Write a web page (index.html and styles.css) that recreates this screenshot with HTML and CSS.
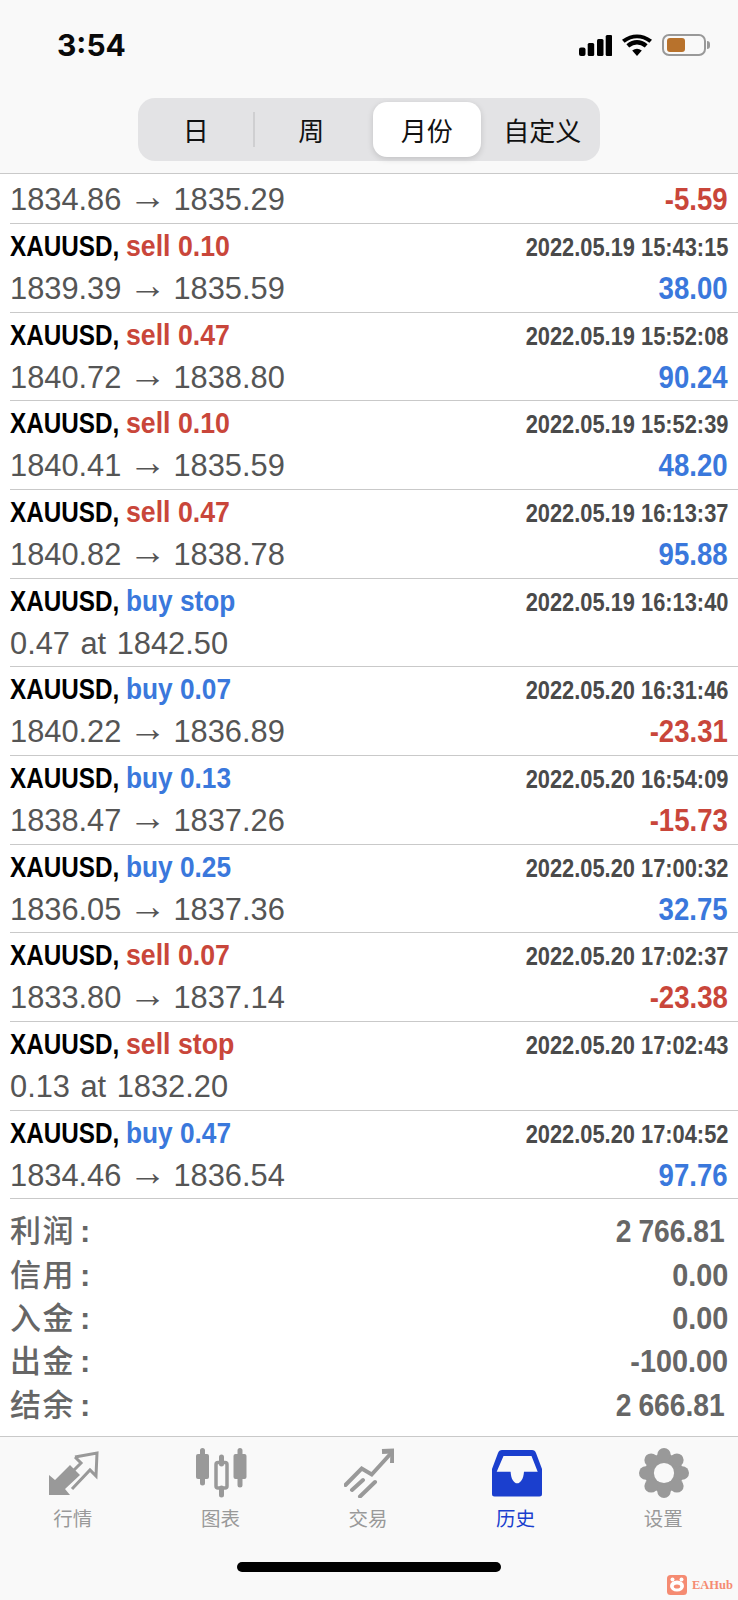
FILE: index.html
```html
<!DOCTYPE html>
<html>
<head>
<meta charset="utf-8">
	<title>History</title>
	<link rel="stylesheet" href="styles.css">
</head>
<body>

<div class="page">
	<div class="top">
		<div class="status">
			<span class="clock">3:54</span>
			<div class="status-icons">
				<svg class="signal" width="33" height="21" viewBox="0 0 33 21">
					<rect x="0" y="12.5" width="6.5" height="8.5" rx="2"/>
					<rect x="8.7" y="8" width="6.5" height="13" rx="1.5"/>
					<rect x="18" y="4" width="6.5" height="17" rx="1.5"/>
					<rect x="26.7" y="0" width="6.5" height="21" rx="1.5"/>
				</svg>
				<svg class="wifi" width="30" height="22" viewBox="0 0 30 22">
					<path d="M15 22 L10.2 16.6 Q15 13 19.8 16.6 Z"/>
					<path d="M7.2 13.4 L4.4 10.2 Q15 1.8 25.6 10.2 L22.8 13.4 Q15 7.4 7.2 13.4 Z"/>
					<path d="M2.6 8.3 L0 5.4 Q15 -5.2 30 5.4 L27.4 8.3 Q15 -0.6 2.6 8.3 Z" transform="translate(0 0.4)"/>
				</svg>
				<div class="battery"><div class="battery-fill"></div></div>
				<div class="battery-nub"></div>
			</div>
		</div>
		<div class="segments">
			<div class="seg seg-line">日</div>
			<div class="seg">周</div>
			<div class="seg active">月份</div>
			<div class="seg">自定义</div>
		</div>
	</div>

	<div class="list">
		<div class="row row-cut">
			<div class="line">
				<span class="price">1834.86 <span class="arrow">→</span> 1835.29</span>
				<span class="pnl neg">-5.59</span>
			</div>
		</div>
		<div class="row">
			<div class="line">
				<div class="title"><span class="sym">XAUUSD,</span><span class="act sell">sell 0.10</span></div>
				<span class="time">2022.05.19 15:43:15</span>
			</div>
			<div class="line">
				<span class="price">1839.39 <span class="arrow">→</span> 1835.59</span>
				<span class="pnl pos">38.00</span>
			</div>
		</div>
		<div class="row">
			<div class="line">
				<div class="title"><span class="sym">XAUUSD,</span><span class="act sell">sell 0.47</span></div>
				<span class="time">2022.05.19 15:52:08</span>
			</div>
			<div class="line">
				<span class="price">1840.72 <span class="arrow">→</span> 1838.80</span>
				<span class="pnl pos">90.24</span>
			</div>
		</div>
		<div class="row">
			<div class="line">
				<div class="title"><span class="sym">XAUUSD,</span><span class="act sell">sell 0.10</span></div>
				<span class="time">2022.05.19 15:52:39</span>
			</div>
			<div class="line">
				<span class="price">1840.41 <span class="arrow">→</span> 1835.59</span>
				<span class="pnl pos">48.20</span>
			</div>
		</div>
		<div class="row">
			<div class="line">
				<div class="title"><span class="sym">XAUUSD,</span><span class="act sell">sell 0.47</span></div>
				<span class="time">2022.05.19 16:13:37</span>
			</div>
			<div class="line">
				<span class="price">1840.82 <span class="arrow">→</span> 1838.78</span>
				<span class="pnl pos">95.88</span>
			</div>
		</div>
		<div class="row">
			<div class="line">
				<div class="title"><span class="sym">XAUUSD,</span><span class="act buy">buy stop</span></div>
				<span class="time">2022.05.19 16:13:40</span>
			</div>
			<div class="line">
				<span class="price">0.47 at 1842.50</span>
			</div>
		</div>
		<div class="row">
			<div class="line">
				<div class="title"><span class="sym">XAUUSD,</span><span class="act buy">buy 0.07</span></div>
				<span class="time">2022.05.20 16:31:46</span>
			</div>
			<div class="line">
				<span class="price">1840.22 <span class="arrow">→</span> 1836.89</span>
				<span class="pnl neg">-23.31</span>
			</div>
		</div>
		<div class="row">
			<div class="line">
				<div class="title"><span class="sym">XAUUSD,</span><span class="act buy">buy 0.13</span></div>
				<span class="time">2022.05.20 16:54:09</span>
			</div>
			<div class="line">
				<span class="price">1838.47 <span class="arrow">→</span> 1837.26</span>
				<span class="pnl neg">-15.73</span>
			</div>
		</div>
		<div class="row">
			<div class="line">
				<div class="title"><span class="sym">XAUUSD,</span><span class="act buy">buy 0.25</span></div>
				<span class="time">2022.05.20 17:00:32</span>
			</div>
			<div class="line">
				<span class="price">1836.05 <span class="arrow">→</span> 1837.36</span>
				<span class="pnl pos">32.75</span>
			</div>
		</div>
		<div class="row">
			<div class="line">
				<div class="title"><span class="sym">XAUUSD,</span><span class="act sell">sell 0.07</span></div>
				<span class="time">2022.05.20 17:02:37</span>
			</div>
			<div class="line">
				<span class="price">1833.80 <span class="arrow">→</span> 1837.14</span>
				<span class="pnl neg">-23.38</span>
			</div>
		</div>
		<div class="row">
			<div class="line">
				<div class="title"><span class="sym">XAUUSD,</span><span class="act sell">sell stop</span></div>
				<span class="time">2022.05.20 17:02:43</span>
			</div>
			<div class="line">
				<span class="price">0.13 at 1832.20</span>
			</div>
		</div>
		<div class="row">
			<div class="line">
				<div class="title"><span class="sym">XAUUSD,</span><span class="act buy">buy 0.47</span></div>
				<span class="time">2022.05.20 17:04:52</span>
			</div>
			<div class="line">
				<span class="price">1834.46 <span class="arrow">→</span> 1836.54</span>
				<span class="pnl pos">97.76</span>
			</div>
		</div>
	</div>

	<div class="summary">
		<div class="sum-row"><span class="sum-label">利润<i class="colon">:</i></span><span class="sum-value wide">2 766.81</span></div>
		<div class="sum-row"><span class="sum-label">信用<i class="colon">:</i></span><span class="sum-value">0.00</span></div>
		<div class="sum-row"><span class="sum-label">入金<i class="colon">:</i></span><span class="sum-value">0.00</span></div>
		<div class="sum-row"><span class="sum-label">出金<i class="colon">:</i></span><span class="sum-value">-100.00</span></div>
		<div class="sum-row"><span class="sum-label">结余<i class="colon">:</i></span><span class="sum-value wide">2 666.81</span></div>
	</div>

	<div class="bottom">
		<div class="tabs">
			<div class="tab">
				<svg class="tab-icon" width="50" height="50" viewBox="0 0 50 50">
					<path d="M0 47 L0 27 L6 32 L21 17 L31 27 L16 41 L21 47 Z" fill="#999"/>
					<path d="M26 9 L48 5 L47 28 L41 22 L23 41 M26 9 L32 15 L23 24" fill="none" stroke="#999" stroke-width="3"/>
				</svg>
				<span class="tab-label">行情</span>
			</div>
			<div class="tab">
				<svg class="tab-icon" width="51" height="50" viewBox="0 0 51 50">
					<path d="M6.5 2.5 V35 M44 2.5 V37 M25.5 9 V16 M25.5 40 V47" stroke="#999" stroke-width="5" stroke-linecap="round"/>
					<rect x="0" y="6" width="13" height="25" rx="2" fill="#999"/>
					<rect x="37.5" y="6" width="13" height="25" rx="2" fill="#999"/>
					<rect x="20" y="14.5" width="11" height="25.5" rx="2" fill="none" stroke="#999" stroke-width="3.5"/>
				</svg>
				<span class="tab-label">图表</span>
			</div>
			<div class="tab">
				<svg class="tab-icon" width="50" height="50" viewBox="0 0 50 50">
					<path d="M1.5 37 L17.7 20.5 L27.7 26.5 L47.7 4.5" fill="none" stroke="#999" stroke-width="4" stroke-linecap="round"/>
					<path d="M8 42 L19 32 M16 48.5 L31 34" fill="none" stroke="#999" stroke-width="4" stroke-linecap="round"/>
					<path d="M38 3.5 L49 3 L48.5 15" fill="none" stroke="#999" stroke-width="5"/>
				</svg>
				<span class="tab-label">交易</span>
			</div>
			<div class="tab tab-on">
				<svg class="tab-icon" width="50" height="50" viewBox="0 0 50 50">
					<path fill-rule="evenodd" fill="#1b3fce" d="M10 2 H40 Q43 2 44 5 L50 21 V46 Q50 48.5 47.5 48.5 H2.5 Q0 48.5 0 46 V21 L6 5 Q7 2 10 2 Z M11.5 8 L4.7 23.7 H18.6 C19 31 22 35.3 25.2 35.3 C28.4 35.3 31.5 31 32 23.7 H45.7 L39.5 8 Z"/>
				</svg>
				<span class="tab-label">历史</span>
			</div>
			<div class="tab">
				<svg class="tab-icon" width="52" height="52" viewBox="0 0 52 52">
					<g fill="#999">
						<circle cx="26" cy="26" r="20"/>
						<circle cx="26" cy="7" r="7"/>
						<circle cx="26" cy="45" r="7"/>
						<circle cx="7" cy="26" r="7"/>
						<circle cx="45" cy="26" r="7"/>
						<circle cx="12.6" cy="12.6" r="7"/>
						<circle cx="39.4" cy="12.6" r="7"/>
						<circle cx="12.6" cy="39.4" r="7"/>
						<circle cx="39.4" cy="39.4" r="7"/>
					</g>
					<circle cx="26" cy="26" r="10.5" fill="#f9f9f9"/>
				</svg>
				<span class="tab-label">设置</span>
			</div>
		</div>
		<div class="home-bar"></div>
		<div class="mark">
			<svg width="20" height="20" viewBox="0 0 20 20">
				<rect width="20" height="20" rx="3.5" fill="#f58b72"/>
				<circle cx="5.5" cy="4.5" r="2" fill="#fff"/>
				<circle cx="14.5" cy="4.5" r="2" fill="#fff"/>
				<ellipse cx="10" cy="11" rx="7" ry="5.6" fill="#fff"/>
				<ellipse cx="10" cy="11.5" rx="3.2" ry="2" fill="#f58b72"/>
			</svg>
			<span class="mark-text">EAHub</span>
		</div>
	</div>
</div>

</body>
</html>
```

FILE: styles.css
```css
body{
	margin: 0;
	background: #fff;
	font-family: "Liberation Sans", "Noto Sans CJK SC", sans-serif;
}
.page{
	width: 738px;
	height: 1600px;
	display: flex;
	flex-direction: column;
	overflow: hidden;
	position: relative;
}

/* top bar */
.top{
	height: 173px;
	background: #f9f9f9;
	border-bottom: 1px solid #c9c9c9;
	flex: none;
}
.status{
	display: flex;
	justify-content: space-between;
	align-items: center;
	height: 22px;
	padding: 34px 28px 0 57px;
}
.clock{
	font-family: Inter, sans-serif;
	font-weight: 700;
	font-size: 30px;
	line-height: 22px;
	color: #0a0a0a;
}
.status-icons{
	display: flex;
	align-items: center;
}
.signal{
	margin-right: 10px;
}
.wifi{
	margin-right: 10px;
}
.battery{
	width: 34px;
	height: 14px;
	border: 2px solid #999;
	border-radius: 7px;
	padding: 2px 3px;
	margin-right: 1px;
}
.battery-fill{
	width: 18px;
	height: 14px;
	background: #b8722c;
	border-radius: 3px;
}
.battery-nub{
	width: 3px;
	height: 8px;
	background: #999;
	border-radius: 0 3px 3px 0;
}

/* segmented control */
.segments{
	display: grid;
	grid-template-columns: repeat(4, 1fr);
	width: 462px;
	height: 63px;
	margin: 42px auto 0;
	background: #e3e3e5;
	border-radius: 17px;
}
.seg{
	position: relative;
	display: flex;
	align-items: center;
	justify-content: center;
	margin: 4px;
	font-family: "Noto Sans CJK SC", sans-serif;
	font-size: 26px;
	color: #111;
}
.seg.active{
	background: #fff;
	border-radius: 14px;
	box-shadow: 0 2px 6px rgba(0, 0, 0, 0.15);
}
.seg-line::after{
	content: "";
	position: absolute;
	right: -5px;
	top: 10px;
	bottom: 10px;
	width: 2px;
	background: #cfcfd1;
}

/* trade rows */
.list{
	flex: none;
}
.row{
	box-sizing: border-box;
	height: 88.68px;
	margin-left: 10px;
	padding: 1px 10px 0 0;
	border-bottom: 1px solid #c9c9c9;
}
.row-cut{
	height: 50px;
	padding-top: 5px;
}
.line{
	display: flex;
	justify-content: space-between;
	align-items: baseline;
	height: 43px;
	line-height: 42px;
	white-space: nowrap;
}
.title{
	display: flex;
	align-items: baseline;
}
.sym{
	font-size: 30px;
	font-weight: bold;
	color: #000;
	transform: scaleX(0.81);
	transform-origin: left;
	margin-right: -19px;
}
.act{
	font-size: 30px;
	font-weight: bold;
	transform: scaleX(0.875);
	transform-origin: left;
}
.sell{
	color: #c9463a;
	transform: scaleX(0.89);
}
.buy{
	color: #3a78dc;
}
.time{
	font-size: 26px;
	font-weight: bold;
	color: #4a4a4a;
	transform: scaleX(0.84);
	transform-origin: right;
}
.price{
	font-size: 30.8px;
	word-spacing: 2px;
	color: #555;
}
.arrow{
	font-size: 38px;
	line-height: 0;
	vertical-align: 1px;
	margin: 0 -3.5px;
}
.pnl{
	font-size: 31px;
	font-weight: bold;
	transform: scaleX(0.89);
	transform-origin: right;
}
.pnl.neg{
	color: #c9463a;
}
.pnl.pos{
	color: #3a78dc;
}

/* totals */
.summary{
	flex: 1;
	padding: 8px 10px 0;
}
.sum-row{
	display: flex;
	justify-content: space-between;
	align-items: baseline;
	height: 43.3px;
	line-height: 43.3px;
	white-space: nowrap;
}
.sum-label{
	font-family: "Noto Sans CJK SC", sans-serif;
	font-weight: 500;
	font-size: 31px;
	letter-spacing: 1.5px;
	color: #666;
}
.colon{
	font-style: normal;
	font-family: "Liberation Sans", sans-serif;
	font-weight: bold;
	margin-left: 5px;
}
.sum-value{
	font-size: 31px;
	font-weight: bold;
	color: #666;
	transform: scaleX(0.93);
	transform-origin: right;
}
.sum-value.wide{
	transform: scaleX(0.91);
	word-spacing: -1px;
	margin-right: 3px;
}

/* bottom tabs */
.bottom{
	flex: none;
	height: 163px;
	background: #f9f9f9;
	border-top: 1px solid #c9c9c9;
}
.tabs{
	display: flex;
	padding-top: 11px;
}
.tab{
	flex: 1;
	display: flex;
	flex-direction: column;
	align-items: center;
}
.tab-icon{
	height: 50px;
	display: block;
}
.tab-label{
	margin: 8px 2px 0 0;
	font-family: "Noto Sans CJK SC", sans-serif;
	font-size: 19.5px;
	line-height: 24px;
	color: #999;
}
.tab-on .tab-label{
	color: #1b3fce;
}
.home-bar{
	width: 264px;
	height: 10px;
	margin: 32px auto 0;
	background: #000;
	border-radius: 5px;
}

/* watermark in the corner */
.mark{
	position: absolute;
	left: 667px;
	top: 1575px;
	display: flex;
	align-items: center;
}
.mark-text{
	margin-left: 5px;
	font-family: "Liberation Serif", serif;
	font-weight: bold;
	font-size: 12.5px;
	color: #f58b72;
}
```
